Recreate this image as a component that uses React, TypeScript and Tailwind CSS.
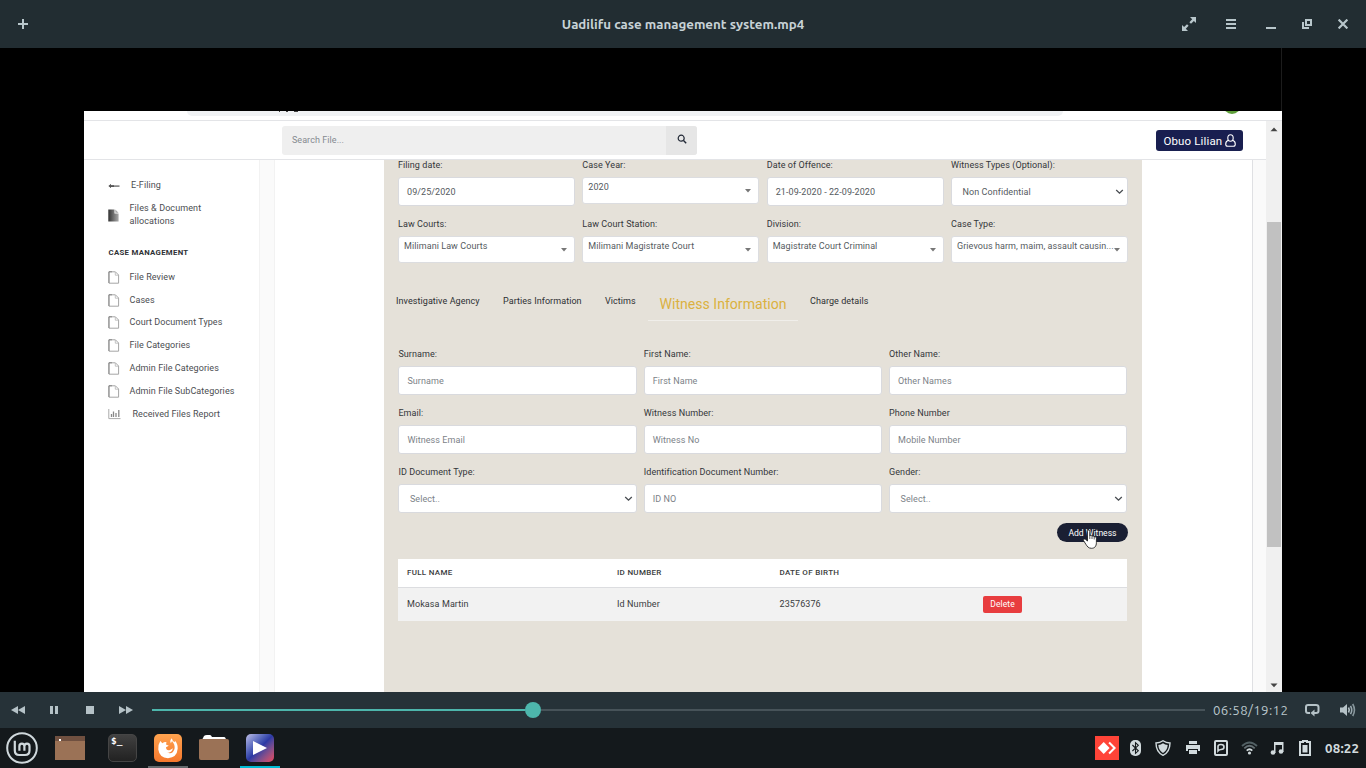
import React from "react";

const sidebarItems = [
  "File Review",
  "Cases",
  "Court Document Types",
  "File Categories",
  "Admin File Categories",
  "Admin File SubCategories",
];

function DocIcon() {
  return (
    <svg width="12" height="13" viewBox="0 0 12 13" fill="none" className="shrink-0">
      <path d="M1 .8H7.4L10.6 4V12.2H1Z" stroke="#a5a5a5" />
      <path d="M7.3 1V4.2H10.5" stroke="#b5b5b5" strokeWidth=".8" />
      <path d="M.9 12V.8H4" stroke="#777" strokeWidth=".8" />
    </svg>
  );
}

function Chevron() {
  return (
    <svg width="9" height="6" viewBox="0 0 9 6" fill="none" className="shrink-0">
      <path d="M1.2 1L4.5 4.2L7.8 1" stroke="#484c51" strokeWidth="1.3" />
    </svg>
  );
}

function Caret() {
  return (
    <svg width="6" height="4" viewBox="0 0 6 4" className="shrink-0">
      <path d="M0 0H6L3 3.6Z" fill="#777" />
    </svg>
  );
}

type FieldProps = { label: string; value: string; kind?: "input" | "combo" | "select"; muted?: boolean };

function Field({ label, value, kind = "input", muted }: FieldProps) {
  return (
    <div className="flex h-[59px] min-w-0 flex-col">
      <div className="h-[18px] text-[9px] leading-[12px] tracking-[0.07px] whitespace-nowrap text-[#34363a]">{label}</div>
      {kind === "combo" ? (
        <div className="flex h-[27px] items-center justify-between rounded-[3px] border border-[#dcdde0] bg-white pr-[7px] pl-[5px] text-[#555a60]">
          <span className="-mt-[7px] text-[9px] leading-[12px] tracking-[0.07px] whitespace-nowrap">{value}</span>
          <Caret />
        </div>
      ) : (
        <div
          className={`flex h-[29px] items-center justify-between rounded-[3px] border border-[#d9dade] bg-white pr-[3px] ${
            kind === "select" ? "pl-[10.5px]" : "pl-[8px]"
          } ${muted ? "text-[#7c8288]" : "text-[#555a60]"}`}
        >
          <span className="text-[9px] leading-[12px] tracking-[0.07px] whitespace-nowrap">{value}</span>
          {kind === "select" && <Chevron />}
        </div>
      )}
    </div>
  );
}

function TitleBar() {
  return (
    <header className="flex h-12 shrink-0 items-center bg-[#222d32] text-[#b8c6cb]">
      <div className="flex w-[440px] pl-[18px]">
        <svg width="10" height="10" viewBox="0 0 10 10" fill="currentColor"><path d="M4 0H6V4H10V6H6V10H4V6H0V4H4Z" /></svg>
      </div>
      <div className="w-[486px] pt-[2px] text-center font-['Ubuntu','Noto_Sans',sans-serif] text-[13.3px] font-bold text-[#c7d2d6]">
        Uadilifu case management system.mp4
      </div>
      <svg className="ml-[255px]" width="16" height="16" viewBox="0 0 16 16" fill="currentColor">
        <path d="M9 1H15V7L12.9 4.9L10 7.8L8.4 6.2L11.2 3.2ZM1 15V9L3.1 11.1L6 8.2L7.6 9.8L4.8 12.8L7 15Z" />
      </svg>
      <svg className="ml-[29px]" width="10" height="10" viewBox="0 0 10 10" fill="currentColor"><path d="M0 0H10V2H0ZM0 4H10V6H0ZM0 8H10V10H0Z" /></svg>
      <svg className="ml-[30px]" width="10" height="10" viewBox="0 0 10 10" fill="currentColor"><path d="M0 8H10V10H0Z" /></svg>
      <svg className="ml-[26px]" width="10" height="10" viewBox="0 0 10 10" fill="currentColor" fillRule="evenodd">
        <path d="M3 0H10V7H3ZM5 2V5H8V2ZM0 3H2V8H7V10H0Z" />
      </svg>
      <svg className="ml-[26px]" width="10" height="10" viewBox="0 0 10 10" stroke="currentColor" strokeWidth="2.2"><path d="M.6 .6L9.4 9.4M9.4 .6L.6 9.4" /></svg>
    </header>
  );
}

function Sidebar() {
  return (
    <aside className="w-[175px] shrink-0 pl-6 text-[9px] leading-[13px] tracking-[0.1px] text-[#4b4d51]">
      <div className="mt-[19px] flex h-[13px] items-center">
        <svg width="12" height="6" viewBox="0 0 12 6"><path d="M.5 3L3 .9V2.3H11.5V3.9H3V5.1Z" fill="#8a8a8a" /><path d="M.5 3L3 .9V2.3H6V3.9H3V5.1Z" fill="#555" /></svg>
        <span className="ml-[11px]">E-Filing</span>
      </div>
      <div className="mt-[10px] flex h-[26px] items-center">
        <svg width="12" height="13" viewBox="0 0 12 13">
          <defs><linearGradient id="doc"><stop stopColor="#333" /><stop offset="1" stopColor="#aaa" /></linearGradient></defs>
          <path d="M.3 .5H6.5V4.5H10.6V12.5H.3Z" fill="url(#doc)" /><path d="M7.3 .5L10.6 3.7H7.3Z" fill="#aaa" />
        </svg>
        <span className="ml-[9.5px] w-20">Files &amp; Document allocations</span>
      </div>
      <div className="mt-[18px] pl-[0.5px] text-[7.8px] font-bold tracking-[0.3px] whitespace-nowrap text-[#303236]">CASE MANAGEMENT</div>
      <div className="mt-[6.7px] flex flex-col">
        {sidebarItems.map((t) => (
          <div key={t} className="flex h-[22.9px] items-center whitespace-nowrap">
            <DocIcon />
            <span className="ml-[9.5px] tracking-[0.07px]">{t}</span>
          </div>
        ))}
        <div className="flex h-[22.9px] items-center whitespace-nowrap">
          <svg width="13" height="12" viewBox="0 0 13 12" fill="none" stroke="#888">
            <path d="M.8 1V10.6H12.5" stroke="#aaa" /><path d="M3.5 9V6M5.5 9V3.5M8 9V5M10.8 9V2" strokeWidth="1.3" />
          </svg>
          <span className="ml-[11.5px] tracking-[0.07px]">Received Files Report</span>
        </div>
      </div>
    </aside>
  );
}

function CaseForm() {
  return (
    <main className="w-[758px] shrink-0 overflow-hidden bg-[#e5e1d9] pl-[14px]">
      <div className="-mt-[1px] grid w-[730px] grid-cols-4 gap-x-[7.4px]">
        <Field label="Filing date:" value="09/25/2020" />
        <Field label="Case Year:" value="2020" kind="combo" />
        <Field label="Date of Offence:" value="21-09-2020 - 22-09-2020" />
        <Field label="Witness Types (Optional):" value="Non Confidential" kind="select" />
        <Field label="Law Courts:" value="Milimani Law Courts" kind="combo" />
        <Field label="Law Court Station:" value="Milimani Magistrate Court" kind="combo" />
        <Field label="Division:" value="Magistrate Court Criminal" kind="combo" />
        <Field label="Case Type:" value="Grievous harm, maim, assault causin..." kind="combo" />
      </div>
      <nav className="-ml-[2px] flex h-[71px] pt-[18px] text-[9px] leading-[12px] tracking-[0.07px] whitespace-nowrap text-[#2d2f33]">
        <span className="w-[107px]">Investigative Agency</span>
        <span className="w-[102px]">Parties Information</span>
        <span className="w-[43px]">Victims</span>
        <span className="-mt-[5px] h-[31px] w-[150px] border-b border-[#f0eeea] pt-[4px] text-center text-[14.1px] leading-[20px] tracking-normal text-[#dbb13f]">
          Witness Information
        </span>
        <span className="ml-[12px]">Charge details</span>
      </nav>
      <div className="ml-[0.4px] grid w-[728.8px] grid-cols-3 gap-x-[7.2px]">
        <Field label="Surname:" value="Surname" muted />
        <Field label="First Name:" value="First Name" muted />
        <Field label="Other Name:" value="Other Names" muted />
        <Field label="Email:" value="Witness Email" muted />
        <Field label="Witness Number:" value="Witness No" muted />
        <Field label="Phone Number" value="Mobile Number" muted />
        <Field label="ID Document Type:" value="Select.." kind="select" muted />
        <Field label="Identification Document Number:" value="ID NO" muted />
        <Field label="Gender:" value="Select.." kind="select" muted />
      </div>
      <div className="flex w-[729.5px] justify-end">
        <button className="relative -mt-[2px] h-[19px] w-[71px] rounded-full bg-[#1a1f33] pl-[1px] text-[8.6px] leading-[20px] whitespace-nowrap text-white">
          Add Witness
          <svg className="absolute top-[6px] left-[25px]" width="17" height="21" viewBox="0 0 17 21">
            <path
              d="M5.5 12V2.2C5.5 .6 7.8 .6 7.8 2.2V7C8.2 6 10 6.2 10 7.4C10.5 6.6 12.2 6.8 12.2 8C12.8 7.4 14.4 7.7 14.4 9.2V13.5C14.4 17.5 12.5 19.3 9.5 19.3C6.4 19.3 5.3 17.5 3.8 15.2L1.5 11.5C1 10.4 2.4 9.6 3.4 10.3Z"
              fill="white" stroke="#222" strokeWidth=".9"
            />
            <path d="M7.8 7V10M10 7.5V10M12.2 8V10.5" stroke="#333" strokeWidth=".8" />
          </svg>
        </button>
      </div>
      <table className="mt-[17px] w-[729px] table-fixed border-collapse text-left text-[9px] text-[#3a3c40]">
        <thead>
          <tr className="h-[28px] border-b border-[#dcdde0] bg-white text-[8px] tracking-[0.3px]">
            <th className="w-[210px] p-0 pt-px pl-[9px] font-medium">FULL NAME</th>
            <th className="w-[162.5px] p-0 pt-px pl-[9px] font-medium">ID NUMBER</th>
            <th className="w-[203.5px] p-0 pt-px pl-[9px] font-medium">DATE OF BIRTH</th>
            <th className="p-0" />
          </tr>
        </thead>
        <tbody>
          <tr className="h-[34px] bg-[#f2f2f2] tracking-[0.1px]">
            <td className="p-0 pl-[9px]">Mokasa Martin</td>
            <td className="p-0 pl-[9px]">Id Number</td>
            <td className="p-0 pl-[9px]">23576376</td>
            <td className="p-0 pl-[9px]">
              <button className="block h-[17px] w-[39px] rounded-[2px] bg-[#e83d3f] text-[8.5px] text-white">Delete</button>
            </td>
          </tr>
        </tbody>
      </table>
    </main>
  );
}

function VideoFrame() {
  return (
    <section className="relative flex h-[644px] shrink-0 flex-col bg-black pr-[84px] pl-[84px]">
      <div className="h-[63px] border-r border-[#1c1c1c]" />
      <div className="flex h-[581px] flex-col overflow-hidden bg-white font-['Roboto',sans-serif]">
        <div className="relative h-[10px] shrink-0 overflow-hidden border-b border-[#e3e4e7]">
          <div className="ml-[103px] h-[5px] w-[876px] rounded-b-[12px] bg-[#f0f2f4]" />
          <div className="absolute -top-[15px] left-[1139px] h-[18px] w-[18px] rounded-full bg-[#5f9f3a]" />
          <div className="absolute top-0 left-[195px] flex gap-[6px]">
            <i className="h-px w-px bg-[#444]" /><i className="h-px w-[2px] bg-[#444]" /><i className="h-px w-[4px] bg-[#444]" />
          </div>
        </div>
        <div className="flex min-h-0 flex-1">
          <div className="flex w-[1182px] flex-col">
            <div className="flex h-[39px] shrink-0 items-center border-b border-[#e3e4e7]">
              <div className="ml-[198.4px] flex h-[29px] w-[415px] overflow-hidden rounded-[3px] bg-[#efefef]">
                <span className="flex-1 pl-[9.5px] text-[9px] leading-[28px] tracking-[0.07px] text-[#858a90]">Search File...</span>
                <div className="flex w-[31px] items-center justify-center bg-[#e6e6e6]">
                  <svg width="10" height="10" viewBox="0 0 10 10" fill="none" stroke="#222936" className="-mt-[3px]">
                    <circle cx="4.2" cy="4.2" r="3" strokeWidth="1.2" /><path d="M6.5 6.5L9.2 9.2" strokeWidth="1.4" />
                  </svg>
                </div>
              </div>
              <div className="ml-[459px] flex h-[21px] w-[87px] items-center justify-center gap-[3px] rounded-[3px] bg-[#191f50] text-[11.5px] leading-[20px] tracking-[0.15px] whitespace-nowrap text-white">
                <span className="pt-px">Obuo Lilian</span>
                <svg width="11" height="13" viewBox="0 0 11 13" fill="none" stroke="white" strokeWidth="1.1" className="shrink-0">
                  <ellipse cx="5.5" cy="4" rx="2.7" ry="3.3" /><path d="M3.4 6.3C1.6 6.9 .7 8.3 .7 10.2C.7 11.5 1.3 12.2 2.7 12.2H8.3C9.7 12.2 10.3 11.5 10.3 10.2C10.3 8.3 9.4 6.9 7.6 6.3" />
                </svg>
              </div>
            </div>
            <div className="flex min-h-0 flex-1">
              <Sidebar />
              <div className="w-[16px] border-x border-[#f2f2f2] bg-[#fafafa]" />
              <div className="w-[109px]" />
              <CaseForm />
              <div className="w-[110px]" />
              <div className="flex-1 border-l border-[#dfe0e3] bg-[#fafafa]" />
            </div>
          </div>
          <div className="flex flex-1 flex-col items-center bg-[#f0f0f0]">
            <svg className="mt-[6px]" width="8" height="5" viewBox="0 0 8 5"><path d="M.5 4.2L4 .5L7.5 4.2Z" fill="#444" /></svg>
            <div className="mt-[90px] h-[325px] w-[14px] bg-[#c1c1c1]" />
            <svg className="mt-[136px]" width="8" height="5" viewBox="0 0 8 5"><path d="M.5 .5H7.5L4 4.2Z" fill="#444" /></svg>
          </div>
        </div>
      </div>
    </section>
  );
}

function PlayerControls() {
  return (
    <div className="flex h-9 shrink-0 items-center bg-[#263238] text-[#b5c2c7]">
      <svg className="ml-[11px]" width="15" height="8" viewBox="0 0 15 8" fill="currentColor"><path d="M0 4L7 0V8ZM7 4L14 0V8Z" /></svg>
      <svg className="ml-[24px]" width="8" height="8" viewBox="0 0 8 8" fill="currentColor"><path d="M0 0H3V8H0ZM5 0H8V8H5Z" /></svg>
      <div className="ml-[28px] h-2 w-2 bg-current" />
      <svg className="ml-[25px]" width="15" height="8" viewBox="0 0 15 8" fill="currentColor"><path d="M0 0L7 4L0 8ZM7 0L14 4L7 8Z" /></svg>
      <div className="ml-[18px] flex w-[1053px] items-center">
        <div className="h-[2px] w-[373px] bg-[#4db6ac]" />
        <div className="h-4 w-4 rounded-full bg-[#4db6ac]" />
        <div className="h-[2px] flex-1 bg-[#475359]" />
      </div>
      <span className="ml-[8px] w-[76px] pt-[2px] font-['Ubuntu','Noto_Sans',sans-serif] text-[13.3px] tracking-[0.35px] whitespace-nowrap text-[#b9c6cb]">06:58/19:12</span>
      <svg className="ml-[16px]" width="15" height="14" viewBox="0 0 15 14" fill="none" stroke="currentColor" strokeWidth="2">
        <path d="M5 10H3Q1 10 1 8V4Q1 2 3 2H11Q13.5 2 13.5 4V8Q13.5 10 11 10H9" /><path d="M9.5 6.5V13.5L5.5 10Z" fill="currentColor" stroke="none" />
      </svg>
      <svg className="ml-[20px]" width="16" height="14" viewBox="0 0 16 14" fill="none" stroke="currentColor" strokeWidth="1.6">
        <path d="M0 4.5H3L7 1V13L3 9.5H0Z" fill="currentColor" stroke="none" /><path d="M8.5 4.5Q10 7 8.5 9.5" /><path d="M10.5 2.8Q13 7 10.5 11.2" stroke="#99a8ae" /><path d="M12.7 1Q16.2 7 12.7 13" stroke="#87969c" />
      </svg>
    </div>
  );
}

function Taskbar() {
  return (
    <footer className="flex h-10 shrink-0 bg-[#14191c] text-[#d1dadd]">
      <svg className="mt-[4px] ml-[6px]" width="32" height="32" viewBox="0 0 32 32" fill="none" stroke="#cfd8dc">
        <circle cx="16" cy="16" r="14.8" strokeWidth="2" />
        <path d="M8.8 8.8V18.5Q8.8 23 13.3 23H19Q23.5 23 23.5 18.5V14.2Q23.5 11.6 21 11.6Q18.4 11.6 18.4 14.2V18.8M18.4 14.2Q18.4 11.6 15.9 11.6Q13.4 11.6 13.4 14.2V18.8" strokeWidth="2.2" />
      </svg>
      <svg className="mt-[8px] ml-[17px]" width="30" height="24" viewBox="0 0 30 24"><path d="M0 0H30V24H0Z" fill="#9b7256" /><path d="M0 0H30V5H0Z" fill="#705040" /><path d="M4 3H6V5H4Z" fill="#fff" /></svg>
      <div className="mt-[6px] ml-[23px] h-[28px] w-[29px] rounded-[5px] border border-[#454545] bg-linear-to-b from-[#414141] to-[#222] pl-[2px] font-['DejaVu_Sans_Mono',monospace] text-[9.5px] leading-[11px] font-bold text-white">$_</div>
      <div className="ml-[11px] flex h-10 w-10 flex-col items-center border-b-2 border-[#646a6d]">
        <svg className="mt-[6px]" width="28" height="28" viewBox="0 0 28 28">
          <defs><linearGradient id="fx" x2="0" y2="1"><stop stopColor="#ffa34f" /><stop offset="1" stopColor="#f5782d" /></linearGradient></defs>
          <rect width="28" height="28" rx="5" fill="url(#fx)" />
          <path d="M6.3 7.1L8.4 9.2Q10.7 7.6 12.5 8.3L12 10.5L14.8 11.8L12 13.3Q12.2 17 16 16Q18 15 19 14.3Q17.5 19.5 13 18.5Q18.5 21 20.5 15Q21.3 10.7 18 7L16.9 9.2Q15.3 6.9 17.8 4.3Q18.1 7 21 8.3L20.8 6.5Q24 10 23.7 14.6Q23 23.8 14 24.2Q5.4 23.7 4.3 15.5Q4 10.5 6.3 7.1Z" fill="#fff" />
        </svg>
      </div>
      <svg className="mt-[7px] ml-[11px]" width="30" height="25" viewBox="0 0 30 25"><path d="M3 5L5 1Q6 0 8 0H11Q12 0 13 2H25Q27 2 27 6H3Z" fill="#fff" /><path d="M0 5Q0 4 2 4H28Q30 4 30 6V23Q30 25 28 25H2Q0 25 0 23Z" fill="#9b7256" /></svg>
      <div className="ml-[11px] flex h-10 w-10 flex-col items-center border-b-2 border-[#00bcd4]">
        <div className="mt-[6px] flex h-7 w-7 items-center justify-center rounded-[5px] bg-linear-to-br from-[#bfbde5] via-[#2c39a5] via-50% to-[#ed4057]">
          <svg width="14" height="14" viewBox="0 0 14 14"><path d="M0 0L14 7L0 14Z" fill="white" /></svg>
        </div>
      </div>
      <div className="flex-1" />
      <div className="flex w-[271px] items-center">
        <svg width="24" height="24" viewBox="0 0 24 24"><path d="M0 0H24V24H0Z" fill="#ff4438" /><path d="M8.7 6L14.6 12L8.7 18L2.8 12Z" fill="#fff" /><path d="M13.3 6.5L18.8 12L13.3 17.5" transform="translate(.8 0)" fill="none" stroke="#fff" strokeWidth="2" /></svg>
        <svg className="ml-[11px]" width="11" height="16" viewBox="0 0 11 16"><rect width="11" height="16" rx="5" fill="#d1dadd" /><path d="M2.4 5L8.3 10.8L5.5 13.3V2.7L8.3 5.3L2.4 11" fill="none" stroke="#14191c" strokeWidth="1.1" /></svg>
        <svg className="ml-[14px]" width="16" height="16" viewBox="0 0 16 16"><path d="M8 .8Q11 3 15 3Q15 12 8 15.3Q1 12 1 3Q5 3 8 .8Z" fill="none" stroke="#d1dadd" strokeWidth="1.4" /><path d="M8 3.3Q10 4.8 12.7 5Q12.2 10.6 8 13Q3.8 10.6 3.3 5Q6 4.8 8 3.3Z" fill="#d1dadd" /></svg>
        <svg className="ml-[15px]" width="14" height="14" viewBox="0 0 14 14" fill="currentColor"><path d="M3 0H11V3H3ZM0 4H14V10H12V8H2V10H0ZM3 9H11V13H3Z" /></svg>
        <svg className="ml-[14px]" width="14" height="16" viewBox="0 0 14 16"><rect x="1" y="1" width="12" height="14" rx="1" fill="none" stroke="#d1dadd" strokeWidth="2" /><path d="M4 11V6.5Q4 4.5 7 4.5Q10 4.5 10 7Q10 9.5 7 9.5Q5.5 9.5 4 11Z" fill="none" stroke="#d1dadd" strokeWidth="1.6" /></svg>
        <svg className="ml-[13px]" width="17" height="14" viewBox="0 0 17 14" fill="none" strokeWidth="1.8"><path d="M1 5Q8.5 -2 16 5" stroke="#526064" /><path d="M3.3 7.3Q8.5 2.3 13.7 7.3" stroke="#667175" /><path d="M5.7 9.6Q8.5 7 11.3 9.6" stroke="#d1dadd" /><circle cx="8.5" cy="12" r="1.6" fill="#d1dadd" /></svg>
        <svg className="ml-[12px]" width="14" height="14" viewBox="0 0 14 14"><path d="M4 1H13.5V11H12V4H5.5V12H4Z" fill="#d1dadd" /><circle cx="3" cy="11.5" r="2.3" fill="#d1dadd" /><circle cx="11" cy="10.5" r="2.3" fill="#d1dadd" /></svg>
        <svg className="ml-[15px]" width="12" height="16" viewBox="0 0 12 16"><path d="M4 1V2H1V15H11V2H8V1Z" fill="none" stroke="#d1dadd" strokeWidth="2" /><path d="M3.5 5H8.5V12.5H3.5Z" fill="#d1dadd" /></svg>
        <span className="ml-[14px] pt-[2px] font-['Ubuntu','Noto_Sans',sans-serif] text-[13.3px] font-bold tracking-[0.2px]">08:22</span>
      </div>
    </footer>
  );
}

export default function App() {
  return (
    <div className="flex h-[768px] w-[1366px] flex-col overflow-hidden bg-black">
      <TitleBar />
      <VideoFrame />
      <PlayerControls />
      <Taskbar />
    </div>
  );
}
